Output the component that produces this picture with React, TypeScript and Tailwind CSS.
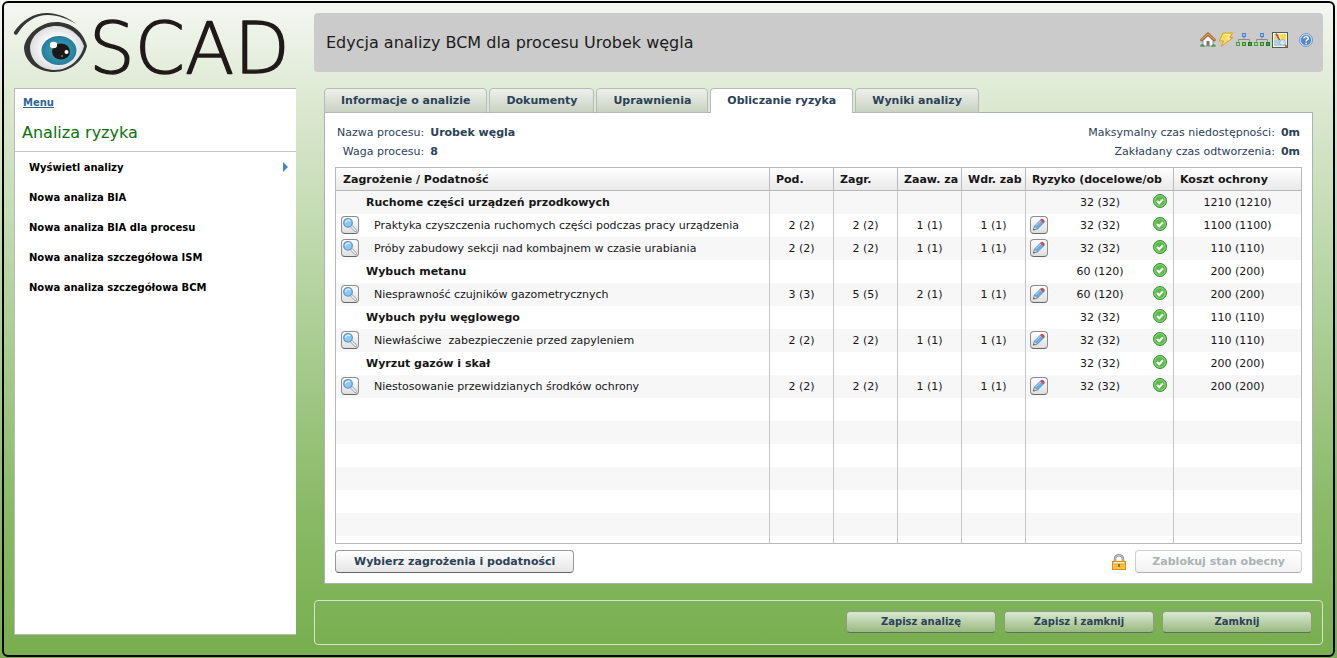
import * as React from "react";

type Row = {
  name: string;
  group?: boolean;
  values?: string[];
  risk: string;
  cost: string;
};

const rows: Row[] = [
  { name: "Ruchome części urządzeń przodkowych", group: true, risk: "32 (32)", cost: "1210 (1210)" },
  {
    name: "Praktyka czyszczenia ruchomych części podczas pracy urządzenia",
    values: ["2 (2)", "2 (2)", "1 (1)", "1 (1)"],
    risk: "32 (32)",
    cost: "1100 (1100)",
  },
  {
    name: "Próby zabudowy sekcji nad kombajnem w czasie urabiania",
    values: ["2 (2)", "2 (2)", "1 (1)", "1 (1)"],
    risk: "32 (32)",
    cost: "110 (110)",
  },
  { name: "Wybuch metanu", group: true, risk: "60 (120)", cost: "200 (200)" },
  {
    name: "Niesprawność czujników gazometrycznych",
    values: ["3 (3)", "5 (5)", "2 (1)", "1 (1)"],
    risk: "60 (120)",
    cost: "200 (200)",
  },
  { name: "Wybuch pyłu węglowego", group: true, risk: "32 (32)", cost: "110 (110)" },
  {
    name: "Niewłaściwe  zabezpieczenie przed zapyleniem",
    values: ["2 (2)", "2 (2)", "1 (1)", "1 (1)"],
    risk: "32 (32)",
    cost: "110 (110)",
  },
  { name: "Wyrzut gazów i skał", group: true, risk: "32 (32)", cost: "200 (200)" },
  {
    name: "Niestosowanie przewidzianych środków ochrony",
    values: ["2 (2)", "2 (2)", "1 (1)", "1 (1)"],
    risk: "32 (32)",
    cost: "200 (200)",
  },
];

const headers = ["Zagrożenie / Podatność", "Pod.", "Zagr.", "Zaaw. za", "Wdr. zab", "Ryzyko (docelowe/ob", "Koszt ochrony"];

const menu = [
  "Wyświetl analizy",
  "Nowa analiza BIA",
  "Nowa analiza BIA dla procesu",
  "Nowa analiza szczegółowa ISM",
  "Nowa analiza szczegółowa BCM",
];

const tabs = ["Informacje o analizie", "Dokumenty", "Uprawnienia", "Obliczanie ryzyka", "Wyniki analizy"];

const Logo: React.FC = () => (
  <svg className="block w-full overflow-visible" viewBox="0 0 282 66" role="img" aria-label="OSCAD">
    <defs>
      <radialGradient id="ball" cx="50%" cy="50%" r="55%">
        <stop offset="0.5" stopColor="#f8f8f8" />
        <stop offset="1" stopColor="#d8d8d8" />
      </radialGradient>
      <radialGradient id="iris">
        <stop offset="0.3" stopColor="#3f9ab2" />
        <stop offset="1" stopColor="#227f9c" />
      </radialGradient>
    </defs>
    <path d="M10 34C12 22 26 9 42 9c15 0 27 9 31 24-3 14-16 26-33 26C24 59 10 49 10 34z" fill="#333634" />
    <path d="M16 34C17 22 29 13 42 13c12 0 24 8 28 20-3 13-15 24-29 24-14 0-25-9-25-23z" fill="url(#ball)" />
    <ellipse cx="45" cy="37.500" rx="17.500" ry="14.500" fill="url(#iris)" />
    <ellipse cx="47" cy="38.500" rx="9" ry="8" fill="#1d1717" />
    <ellipse cx="39.500" cy="32" rx="3.600" ry="3.200" fill="#fff" />
    <circle cx="52.500" cy="39" r="2" fill="#fff" />
    <circle cx="48" cy="43" r="0.800" fill="#bbb" />
    <path d="M0 19C8 7 20 0 33 0c11 0 22 5 30 11.500C54 6 44 2 34 2 21 2 11 9 4 20c-1 3-5 2-4-1z" fill="#333634" />
    <text
      x="75"
      y="60"
      fill="#1f1a18"
      stroke="#1f1a18"
      strokeWidth="1.400"
      strokeLinejoin="round"
      fontSize="72"
      fontWeight="200"
      fontFamily="'DejaVu Sans', sans-serif">
      SCAD
    </text>
  </svg>
);

const HomeIcon: React.FC = () => (
  <svg width="16" height="16" viewBox="0 0 16 16">
    <path d="M3 8.500 8 3.500l5 5V14H3z" fill="#f6f6f6" stroke="#8c8c8c" strokeWidth="0.800" />
    <path d="M6.500 14V9h3v5z" fill="#777" />
    <path d="M.8 8.800 8 2l7.200 6.800" fill="none" stroke="#8d5424" strokeWidth="2.800" />
    <path d="M1.200 8.300 8 2l6.800 6.300" fill="none" stroke="#d79a56" strokeWidth="1.400" />
    <path d="M.3 14.800c-.3-2 1-3 2.500-2.600 1.400.2 2 1.300 1.900 2.600zM11.300 14.800c0-1.500 1-2.700 2.500-2.600 1.400.1 2 1.200 1.900 2.600z" fill="#4f9c48" />
  </svg>
);

const BoltIcon: React.FC = () => (
  <svg width="16" height="16" viewBox="0 0 16 16">
    <path d="M5 1h9.500L12 5.500h3L3 14.500 5.800 9H1.300z" fill="#fbdc62" stroke="#e0a21a" />
    <path d="M6.500 2.500h5.500L9.500 7H12" fill="none" stroke="#fff3b5" />
  </svg>
);

const TreeIcon: React.FC = () => (
  <svg width="18" height="16" viewBox="0 0 18 16">
    <path d="M9 5v3M3.500 9.500V7.500h11v2" fill="none" stroke="#8b8b8b" />
    <rect x="7.500" y="1.500" width="3" height="3" fill="#9cc6f7" stroke="#4d83cc" />
    <rect x="1.500" y="10.500" width="3" height="3" fill="#a5e298" stroke="#4a9d40" />
    <rect x="7.500" y="10.500" width="3" height="3" fill="#84cf77" stroke="#338b2b" />
    <rect x="13.500" y="10.500" width="3" height="3" fill="#4cad43" stroke="#197718" />
  </svg>
);

const MapIcon: React.FC = () => (
  <svg width="16" height="16" viewBox="0 0 16 16">
    <rect x="0.500" y="0.500" width="15" height="15" fill="#f5f5ea" stroke="#4d5c4c" />
    <path d="M2 2h5v6H2z" fill="#c9e0a8" />
    <path d="M7 2h7v6H9z" fill="#f7de4e" />
    <path d="M2 8h5l2 6H2z" fill="#a9d2e8" />
    <path d="M2 12 14 3" stroke="#e9d36a" strokeDasharray="2 1" />
    <path d="M4 1.500 7.500 8" stroke="#df3e32" strokeWidth="1.600" />
    <circle cx="10.500" cy="10.500" r="3" fill="#cfe7fb" stroke="#83b2da" />
    <path d="m13 13 2 2" stroke="#b96d32" strokeWidth="1.800" />
  </svg>
);

const HelpIcon: React.FC = () => (
  <svg width="16" height="16" viewBox="0 0 16 16">
    <circle cx="8" cy="8" r="6.500" fill="#d8e6f7" stroke="#6d96cb" />
    <circle cx="8" cy="8" r="5.200" fill="#5288cb" />
    <path d="M6 6.600C6 4 10.200 4 10.200 6.400 10.200 8 8.100 7.900 8.100 9.500" fill="none" stroke="#fff" strokeWidth="1.500" />
    <circle cx="8.100" cy="11.300" r="0.900" fill="#fff" />
  </svg>
);

const SearchIcon: React.FC = () => (
  <svg width="16" height="16" viewBox="0 0 16 16">
    <path d="m9.500 9.500 4 4" stroke="#9a9a9a" strokeWidth="3" strokeLinecap="round" />
    <path d="m9.500 9.500 4 4" stroke="#f4f4f4" strokeWidth="1.600" strokeLinecap="round" />
    <circle cx="6" cy="5.800" r="4.300" fill="#8fc7f5" stroke="#5593c9" strokeWidth="1.200" />
    <path d="M3.300 5.500a3 3 0 0 1 5 -1.500" fill="none" stroke="#dff1ff" strokeWidth="1.300" />
  </svg>
);

const PencilIcon: React.FC = () => (
  <svg width="16" height="16" viewBox="0 0 16 16">
    <path d="m2.500 13 1-4L10 2.500l3 3L6.500 12z" fill="#6aaee8" stroke="#3d7dbd" strokeWidth="0.700" />
    <path d="m2.500 13 1-4 3 3z" fill="#e6dccb" stroke="#777" strokeWidth="0.600" />
    <path d="m4.800 8.800 5.200-5.200" stroke="#b5dcfb" />
    <path d="m9.300 3.200 1.200-1.200c1-1 4 2 3 3l-1.200 1.200z" fill="#d9444d" />
    <path d="m2.300 13.200.5-1.500 1 1z" fill="#333" />
  </svg>
);

const CheckIcon: React.FC = () => (
  <svg width="16" height="16" viewBox="0 0 16 16">
    <circle cx="8" cy="8" r="6.500" fill="#5cb94b" stroke="#339333" />
    <circle cx="8" cy="8" r="5.300" fill="none" stroke="#9bdc88" strokeWidth="0.800" />
    <path d="m5 8 2.200 2.300L11 6.200" fill="none" stroke="#fff" strokeWidth="2" />
  </svg>
);

const LockIcon: React.FC = () => (
  <svg width="16" height="16" viewBox="0 0 16 16">
    <path d="M4 8V5c0-5 8-5 8 0v3" fill="none" stroke="#8a8a8a" strokeWidth="2.600" />
    <path d="M4 8V5c0-5 8-5 8 0v3" fill="none" stroke="#d6d6d6" strokeWidth="1" />
    <rect x="1.500" y="7.500" width="13" height="8" fill="#f9c750" stroke="#d98b1b" />
    <path d="M3 10.500h10M3 12.500h10" stroke="#eead3a" />
    <path d="M3 8.500h10" stroke="#fff0ae" />
    <path d="M8 10v3" stroke="#84551c" strokeWidth="1.500" />
  </svg>
);

const IconButton: React.FC<{ label: string; children: React.ReactNode }> = ({ label, children }) => (
  <button
    aria-label={label}
    className="flex h-[18px] w-[18px] shrink-0 items-center justify-center rounded-[4px] border border-[#8c8c8c] border-b-[#666] bg-gradient-to-b from-white to-[#dedede]">
    {children}
  </button>
);

const Sidebar: React.FC = () => (
  <aside className="flex w-[282px] shrink-0 flex-col">
    <Logo />
    <nav className="mt-[9px] flex-1 border-b border-l border-t border-[#b7babc] bg-white">
      <div className="border-b border-[#c4c7c9] px-[7px] pb-[6px] pt-[6px]">
        <a href="#menu" className="block px-px text-[10px] font-bold leading-4 text-[#2f6593] underline">
          Menu
        </a>
        <h2 className="mt-[10px] text-[16px] leading-6 text-[#0a720a]">Analiza ryzyka</h2>
      </div>
      <ul className="text-[10px] font-bold text-black">
        {menu.map((item, i) => (
          <li key={item}>
            <a href="#analiza" className="flex h-[30px] items-center justify-between pl-[14px] pr-2">
              {item}
              {i === 0 && (
                <svg width="5" height="10" viewBox="0 0 5 10">
                  <path d="M0 0 5 5 0 10z" fill="#3f87c5" />
                </svg>
              )}
            </a>
          </li>
        ))}
      </ul>
    </nav>
  </aside>
);

const RiskTable: React.FC = () => (
  <div className="border border-[#b7babc]">
    <table className="w-full table-fixed border-separate border-spacing-0 text-[11px] leading-[21px] text-[#161616]">
      <colgroup>
        <col />
        <col className="w-[64px]" />
        <col className="w-[64px]" />
        <col className="w-[64px]" />
        <col className="w-[64px]" />
        <col className="w-[148px]" />
        <col className="w-[127px]" />
      </colgroup>
      <thead>
        <tr className="h-[23px] bg-gradient-to-b from-white to-[#e8e8e8]">
          {headers.map((h) => (
            <th
              key={h}
              className="whitespace-nowrap border-b border-r border-[#b7babc] p-0 pl-[6px] text-left first:pl-[7px] last:border-r-0">
              {h}
            </th>
          ))}
        </tr>
      </thead>
      <tbody>
        {rows.map((row) => (
          <tr key={row.name} className="h-[23px] odd:bg-[#f7f7f7]">
            <td className="whitespace-pre border-r border-[#c4c7c9] p-0">
              {row.group ? (
                <div className="pl-[30px] font-bold">{row.name}</div>
              ) : (
                <div className="flex gap-[15px] pl-[5px]">
                  <div className="pt-px">
                    <IconButton label="Szczegóły">
                      <SearchIcon />
                    </IconButton>
                  </div>
                  {row.name}
                </div>
              )}
            </td>
            {[0, 1, 2, 3].map((i) => (
              <td key={i} className="border-r border-[#c4c7c9] p-0 text-center">
                {row.values?.[i]}
              </td>
            ))}
            <td className="border-r border-[#c4c7c9] p-0">
              <div className="grid grid-cols-[18px_1fr_17px] px-1 text-center">
                <div className="pt-px">
                  {!row.group && (
                    <IconButton label="Edytuj">
                      <PencilIcon />
                    </IconButton>
                  )}
                </div>
                {row.risk}
                <div className="pt-px">
                  <CheckIcon />
                </div>
              </div>
            </td>
            <td className="p-0 text-center">{row.cost}</td>
          </tr>
        ))}
        {/* empty rows down to the bottom edge, the last one is cut */}
        {[0, 1, 2, 3, 4, 5, 6].map((n) => (
          <tr key={n} className="h-[23px] last:h-[7px] odd:bg-[#f7f7f7]">
            {headers.map((h) => (
              <td key={h} className="border-r border-[#c4c7c9] p-0 last:border-r-0" />
            ))}
          </tr>
        ))}
      </tbody>
    </table>
  </div>
);

const Info: React.FC<{ items: string[][] }> = ({ items }) => (
  <dl className="grid grid-cols-[auto_auto] gap-x-[6px] text-right text-[11px] leading-[19px]">
    {items.map(([label, value]) => (
      <React.Fragment key={label}>
        <dt>{label}</dt>
        <dd className="text-left font-bold">{value}</dd>
      </React.Fragment>
    ))}
  </dl>
);

const App: React.FC = () => {
  return (
    <div className="flex min-h-screen bg-[linear-gradient(#f5f7f3,#dde9d2_15%,#b3d29e_45%,#8aba67_77%,#78ae4e)] px-[2px] py-px font-['DejaVu_Sans',Verdana,sans-serif] text-[#2b4257]">
      <div className="flex flex-1 gap-[18px] rounded-[6px] border-2 border-black px-[10px] py-[10px]">
        <div className="flex pb-[10px]">
          <Sidebar />
        </div>
        <main className="flex min-w-0 flex-1 flex-col">
          <header className="flex h-[59px] shrink-0 items-center justify-between rounded-[4px] bg-[#cbcbcb] pl-3 pr-[9px] text-[#1b1b1b]">
            <h1 className="text-[16px]">Edycja analizy BCM dla procesu Urobek węgla</h1>
            <div className="flex items-center pb-[6px]">
              <a href="#start" aria-label="Start"><HomeIcon /></a>
              <a href="#akcje" aria-label="Akcje" className="ml-[2px]"><BoltIcon /></a>
              <a href="#struktura" aria-label="Struktura" className="ml-px"><TreeIcon /></a>
              <a href="#procesy" aria-label="Procesy"><TreeIcon /></a>
              <a href="#mapa" aria-label="Mapa" className="ml-px"><MapIcon /></a>
              <a href="#pomoc" aria-label="Pomoc" className="ml-[10px]"><HelpIcon /></a>
            </div>
          </header>

          <div className="mt-4 flex flex-1 flex-col px-[10px]">
            <div className="relative z-10 -mb-px flex gap-[2px] text-[11px] font-bold">
              {tabs.map((tab) => (
                <button
                  key={tab}
                  className={
                    tab === "Obliczanie ryzyka"
                      ? "h-[25px] rounded-t-[4px] border border-b-0 border-[#b7babc] bg-white px-4 pt-px"
                      : "h-[25px] rounded-t-[4px] border border-[#b7babc] bg-gradient-to-b from-[#eef1ec] to-[#c9d2c2] px-4 pt-px"
                  }>
                  {tab}
                </button>
              ))}
            </div>
            <section className="flex flex-1 flex-col border border-[#aab3b3] bg-white p-[10px] pb-[9px]">
              <div className="flex justify-between px-[2px] pb-[6px]">
                <Info
                  items={[
                    ["Nazwa procesu:", "Urobek węgla"],
                    ["Waga procesu:", "8"],
                  ]}
                />
                <Info
                  items={[
                    ["Maksymalny czas niedostępności:", "0m"],
                    ["Zakładany czas odtworzenia:", "0m"],
                  ]}
                />
              </div>
              <RiskTable />
              <div className="mt-[6px] flex items-center justify-between text-[11px] font-bold">
                <button className="h-[23px] rounded-[4px] border border-[#999] border-b-[#666] bg-gradient-to-b from-white to-[#e6e6e6] px-[18px] pt-px">
                  Wybierz zagrożenia i podatności
                </button>
                <div className="flex items-center gap-2">
                  <LockIcon />
                  <button
                    disabled
                    className="h-[23px] rounded-[4px] border border-[#cfcfcf] border-b-[#b0b0b0] bg-gradient-to-b from-white to-[#f2f2f2] px-4 pt-px text-[#aab3b3]">
                    Zablokuj stan obecny
                  </button>
                </div>
              </div>
            </section>
          </div>

          <footer className="mt-4 flex h-[45px] shrink-0 items-center justify-end gap-2 rounded-[4px] border border-[#d8dfd4] px-[10px] pb-[2px] text-[10px] font-bold">
            {["Zapisz analizę", "Zapisz i zamknij", "Zamknij"].map((label) => (
              <button
                key={label}
                className="h-[22px] w-[150px] rounded-[4px] border border-[#8f998a] border-b-[#5f6f5a] bg-gradient-to-b from-[#dbe8d2] to-[#98ba80]">
                {label}
              </button>
            ))}
          </footer>
        </main>
      </div>
    </div>
  );
};

export default App;
